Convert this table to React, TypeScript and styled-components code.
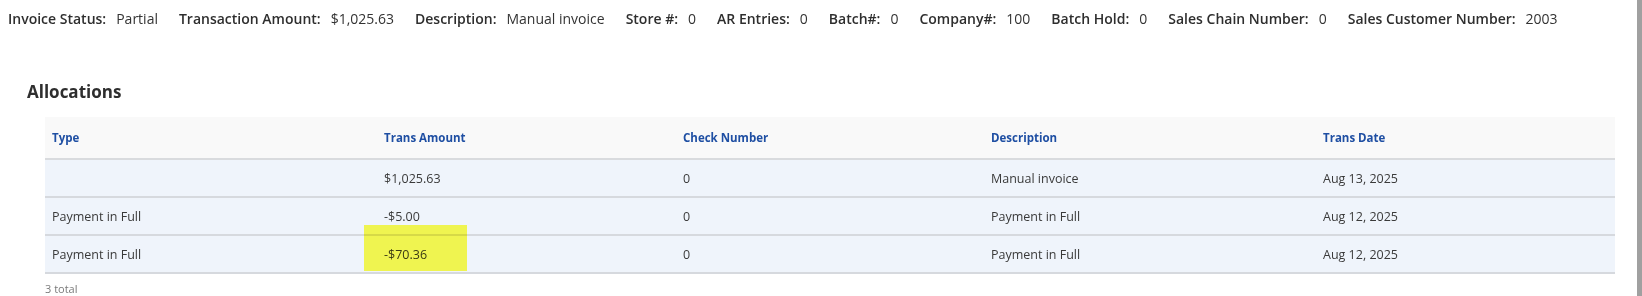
import React from 'react';
import styled, { createGlobalStyle } from 'styled-components';

const GlobalStyle = createGlobalStyle`
  html, body {
    margin: 0;
    padding: 0;
    background: #ffffff;
  }
  body {
    font-family: 'Open Sans', 'Noto Sans', sans-serif;
    color: #333333;
    overflow: hidden;
  }
`;

const Shell = styled.div`
  display: flex;
  width: 1642px;
  height: 296px;
`;

const Page = styled.div`
  flex: 1;
  padding: 8px 0 0 8px;
  overflow: hidden;
`;

const ScrollThumb = styled.div`
  width: 5px;
  background: #a0a0a0;
`;

const InfoBar = styled.div`
  display: flex;
  align-items: center;
  gap: 21px;
  height: 20px;
  font-size: 14px;
  white-space: nowrap;
`;

const InfoItem = styled.div`
  display: flex;
  gap: 10px;
`;

const InfoLabel = styled.span`
  font-weight: 600;
  color: #2e2e2e;
`;

const InfoValue = styled.span`
  color: #333333;
`;

const Section = styled.section`
  margin: 54px 0 0 19px;
`;

const Heading = styled.h2`
  margin: 0;
  font-size: 17px;
  font-weight: 700;
  line-height: 20px;
  color: #2e2e2e;
`;

const TableWrap = styled.div`
  position: relative;
  margin: 15px 0 0 18px;
  width: 1570px;
`;

const Table = styled.table`
  width: 1570px;
  border-collapse: collapse;
  table-layout: fixed;
  font-size: 12.5px;

  th, td {
    box-sizing: border-box;
  }
`;

const HeadCell = styled.th<{ $w: number }>`
  width: ${(p) => p.$w}px;
  height: 42px;
  padding: 0 7px;
  text-align: left;
  font-weight: 700;
  font-size: 11.5px;
  color: #1f4fa3;
  background: #f9f9f9;
  border-bottom: 2px solid #d9dbde;
`;

const Row = styled.tr`
  background: #eff4fb;
  border-bottom: 2px solid #d6d9de;
`;

const Cell = styled.td`
  height: 38px;
  padding: 0 7px;
  color: #3a3a3a;
`;

const Highlight = styled.div`
  position: absolute;
  left: 319px;
  top: 108px;
  width: 103px;
  height: 46px;
  background: #ffff51;
  mix-blend-mode: multiply;
  pointer-events: none;
`;

const Total = styled.div`
  margin: 7px 0 0 18px;
  font-size: 11px;
  color: #7a7a7a;
`;

const info: [string, string][] = [
  ['Invoice Status:', 'Partial'],
  ['Transaction Amount:', '$1,025.63'],
  ['Description:', 'Manual invoice'],
  ['Store #:', '0'],
  ['AR Entries:', '0'],
  ['Batch#:', '0'],
  ['Company#:', '100'],
  ['Batch Hold:', '0'],
  ['Sales Chain Number:', '0'],
  ['Sales Customer Number:', '2003'],
];

const columns: [string, number][] = [
  ['Type', 332],
  ['Trans Amount', 299],
  ['Check Number', 308],
  ['Description', 332],
  ['Trans Date', 299],
];

const rows = [
  ['', '$1,025.63', '0', 'Manual invoice', 'Aug 13, 2025'],
  ['Payment in Full', '-$5.00', '0', 'Payment in Full', 'Aug 12, 2025'],
  ['Payment in Full', '-$70.36', '0', 'Payment in Full', 'Aug 12, 2025'],
];

export default function App() {
  return (
    <>
      <GlobalStyle />
      <Shell>
        <Page>
          <InfoBar>
            {info.map(([label, value]) => (
              <InfoItem key={label}>
                <InfoLabel>{label}</InfoLabel>
                <InfoValue>{value}</InfoValue>
              </InfoItem>
            ))}
          </InfoBar>
          <Section>
            <Heading>Allocations</Heading>
            <TableWrap>
              <Table>
                <thead>
                  <tr>
                    {columns.map(([name, w]) => (
                      <HeadCell key={name} $w={w}>
                        {name}
                      </HeadCell>
                    ))}
                  </tr>
                </thead>
                <tbody>
                  {rows.map((r, i) => (
                    <Row key={i}>
                      {r.map((c, j) => (
                        <Cell key={j}>{c}</Cell>
                      ))}
                    </Row>
                  ))}
                </tbody>
              </Table>
              <Highlight />
            </TableWrap>
            <Total>3 total</Total>
          </Section>
        </Page>
        <ScrollThumb />
      </Shell>
    </>
  );
}
